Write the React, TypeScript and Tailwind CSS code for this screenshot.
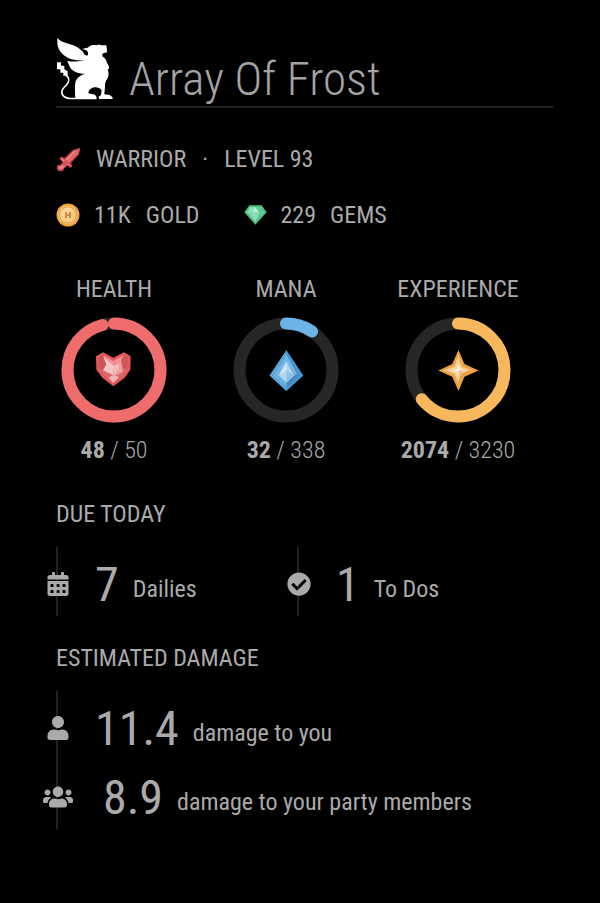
import type { ReactNode } from "react";
import { FaCalendarAlt, FaCheckCircle, FaUser, FaUsers } from "react-icons/fa";

function Griffin() {
  return (
    <svg viewBox="18 18 174 192" className="h-16 w-[58px] shrink-0" fill="#fff" aria-hidden="true">
      <path d="M22 23C31 36 50 38 70 46C86 53 97 61 104 74L112 77C116 71 115 66 109 61L97 57C104 53 112 55 117 50C122 44 132 44 140 46C149 42 155 48 159 46L169 46L170 52L171 67L160 70L157 73L157 79C166 84 170 93 171 99C176 105 178 111 177 117L173 117C177 128 177 140 171 148C166 154 165 162 165 170L163 193L179 195L187 201L188 207L147 207L146 200L153 195L155 181C148 171 137 171 128 173C119 176 115 183 115 190L135 194L140 202L139 208L58 208C43 206 32 197 33 186C34 172 52 165 54 151C54 144 50 140 45 137L40 137L40 128L31 128L31 118L21 118L21 97L33 97L33 107L43 107L43 118L53 124L53 137C60 142 60 155 54 163C48 171 38 177 38 187C38 196 48 202 60 203L76 203C75 190 74 165 77 154C81 143 92 135 105 131C83 131 66 123 59 110C57 102 53 97 52 92C66 97 82 93 104 92C91 91 75 91 62 87C42 80 23 63 22 40Z" />
    </svg>
  );
}

function Sword() {
  return (
    <svg viewBox="48 28 74 76" className="h-[25px] w-[25px] shrink-0" aria-hidden="true">
      <path d="M121 30L117 51L93 76L97 87L91 92L82 84L72 93L68 102L55 101L49 96L50 84L60 82L67 75L58 64L61 58L73 61L98 37Z" fill="#c43f46" />
      <path d="M118 34L101 41L76 67L86 77L113 50Z" fill="#e0676b" />
      <path d="M101 41L107 39L80 68L76 67Z" fill="#f19a9b" />
      <path d="M62 61L70 65L91 84L90 88L81 80L66 95L57 97L53 88L62 85L73 75L62 65Z" fill="#ea8082" />
      <path d="M73 69L82 77L72 85L65 84Z" fill="#d24e55" />
    </svg>
  );
}

function Coin() {
  return (
    <svg viewBox="0 0 24 24" className="h-6 w-6 shrink-0" aria-hidden="true">
      <circle cx="12" cy="12" r="11.5" fill="#eda33b" />
      <circle cx="12" cy="12" r="9.3" fill="#f8cc83" />
      <path d="M5.4 18.6A9.3 9.3 0 0 1 18.6 5.4Z" fill="#fbd69a" />
      <circle cx="12" cy="12" r="8.2" fill="none" stroke="#dd9b43" strokeWidth="1" />
      <path d="M10 9v6M14 9v6M10 12h4" stroke="#b9803a" strokeWidth="1.7" fill="none" />
    </svg>
  );
}

function Gem() {
  return (
    <svg viewBox="131 209 69 60" className="h-5 w-[23px] shrink-0" aria-hidden="true">
      <path d="M147 210L184 210L199 231L165 268L132 231Z" fill="#4cbd84" />
      <path d="M150 215L181 215L191 231L165 259L139 231Z" fill="#7bd5a5" />
      <path d="M150 215L165 215L153 231L139 231Z" fill="#8bdcb0" />
      <path d="M165 215L177 231L153 231Z" fill="#b3edcd" />
      <path d="M153 231L177 231L165 259Z" fill="#95ddb8" />
      <path d="M177 231L191 231L165 259ZM181 215L191 231L177 231L165 215Z" fill="#65c995" />
    </svg>
  );
}

function Heart() {
  return (
    <svg viewBox="0 0 126 126" className="h-[42px] w-[42px]" aria-hidden="true">
      <path d="M9 22L30 10L61 26L93 10L113 22L112 62L95 86L61 112L28 86L10 62Z" fill="#e4575a" />
      <path d="M17 27L31 19L61 36L92 19L105 27L104 60L88 80L61 102L35 80L18 58Z" fill="#d9686a" />
      <path d="M31 19L40 46L30 64L18 58L17 27Z" fill="#cb5557" />
      <path d="M92 19L105 27L104 60L90 58L84 40Z" fill="#cf5557" />
      <path d="M31 19L61 36L92 19L82 38L62 56L40 46Z" fill="#f19192" />
      <path d="M31 24L64 52L60 78L30 64L40 46Z" fill="#f5c4c4" />
      <path d="M64 50L84 32L90 70L66 80L60 78Z" fill="#eda0a0" />
      <path d="M64 50L76 44L78 60L62 78Z" fill="#f4bcbc" />
      <path d="M46 86L62 78L78 84L61 102Z" fill="#f3b4b4" />
    </svg>
  );
}

function Diamond() {
  return (
    <svg viewBox="144 236 104 124" className="h-[41px] w-[35px]" aria-hidden="true">
      <path d="M196 237L247 313L196 360L145 313Z" fill="#4595d1" />
      <path d="M196 237L196 251L155 313L196 349L196 360L145 313Z" fill="#5aa8de" />
      <path d="M196 251L236 313L196 349Z" fill="#4389c2" />
      <path d="M196 251L196 349L155 313Z" fill="#69b0e1" />
      <path d="M196 251L229 309L219 313L196 273L173 313L163 309Z" fill="#75b5e2" />
      <path d="M196 271L219 313L196 334L173 313Z" fill="#b3d5ef" />
      <path d="M196 271L196 297L173 313Z" fill="#d0e5f6" />
      <path d="M196 297L219 313L196 334Z" fill="#8fc1e6" />
    </svg>
  );
}

function Spark() {
  return (
    <svg viewBox="140 237 124 124" className="h-[41px] w-[41px]" aria-hidden="true">
      <path d="M202 237L220 279L263 299L220 318L202 361L183 318L141 299L183 279Z" fill="#efa03b" />
      <path d="M202 251L213 286L248 299L213 311L202 346L190 311L155 299L190 286Z" fill="#f4bd72" />
      <path d="M202 251L202 299L155 299L190 286Z" fill="#f6cb90" />
      <path d="M202 299L248 299L213 311L202 346Z" fill="#e09a45" />
      <path d="M202 265L210 289L234 299L210 308L202 332L193 308L169 299L193 289Z" fill="#f7d5a8" />
      <path d="M202 281L206 294L219 299L206 303L202 316L197 303L184 299L197 294Z" fill="#fdeedd" />
      <path d="M202 299L219 299L210 308L202 332Z" fill="#f0c48f" />
    </svg>
  );
}

type GaugeProps = { label: string; value: number; max: number; color: string; children: ReactNode };

function Gauge({ label, value, max, color, children }: GaugeProps) {
  return (
    <div className="flex flex-col items-center">
      <h2 className="leading-8 whitespace-nowrap">{label}</h2>
      <div className="mt-3 grid place-items-center">
        <svg viewBox="0 0 106 106" className="col-start-1 row-start-1 h-[106px] w-[106px]" fill="none" aria-hidden="true">
          <circle cx="53" cy="53" r="46.5" stroke="#262626" strokeWidth="12" />
          <circle
            cx="53"
            cy="53"
            r="46.5"
            stroke={color}
            strokeWidth="12"
            strokeLinecap="round"
            pathLength={max}
            strokeDasharray={`${value} ${max}`}
            transform="rotate(-90 53 53)"
          />
        </svg>
        <div className="col-start-1 row-start-1">{children}</div>
      </div>
      <p className="mt-[11px] leading-8 font-light whitespace-nowrap">
        <strong className="font-bold">{value}</strong> / {max}
      </p>
    </div>
  );
}

type StatProps = { icon: ReactNode; value: string; label: string; wide?: boolean };

function Stat({ icon, value, label, wide = false }: StatProps) {
  return (
    <div className="flex h-[69px] items-center">
      <div className="-ml-[15px] flex w-[30px] shrink-0 justify-center pt-1">{icon}</div>
      <p className={`flex items-end pt-1.5 whitespace-nowrap ${wide ? "pl-[30px]" : "pl-[22px]"}`}>
        <span className="text-5xl leading-[56px]">{value}</span>
        <span className="pl-[14px] leading-[48px]">{label}</span>
      </p>
    </div>
  );
}

export default function App() {
  return (
    <main className="min-h-screen bg-black pt-9 pb-[70px] font-['Roboto_Condensed',Roboto,sans-serif] text-2xl text-[#aaa]">
      <div className="pr-[47px] pl-14">
        <header className="flex h-[72px] items-start border-b-2 border-[#222]">
          <Griffin />
          <h1 className="pt-[15px] pl-[15px] text-[47px] leading-[56px] font-light whitespace-nowrap text-[#a3a3a3]">
            Array Of Frost
          </h1>
        </header>
        <div className="mt-[35px] flex h-8 items-center leading-8">
          <Sword />
          <span className="pl-[15px]">WARRIOR</span>
          <span className="px-4">·</span>
          <span>LEVEL 93</span>
        </div>
        <div className="mt-6 flex h-8 items-center leading-8">
          <Coin />
          <span className="pl-[14px]">11K</span>
          <span className="pr-11 pl-[15px]">GOLD</span>
          <Gem />
          <span className="pl-[14px]">229</span>
          <span className="pl-[14px]">GEMS</span>
        </div>
      </div>

      <section className="mt-[42px] grid grid-cols-3 pr-14 pl-7">
        <Gauge label="HEALTH" value={48} max={50} color="#ef6c6c">
          <Heart />
        </Gauge>
        <Gauge label="MANA" value={32} max={338} color="#6bb3e6">
          <Diamond />
        </Gauge>
        <Gauge label="EXPERIENCE" value={2074} max={3230} color="#f6b75d">
          <Spark />
        </Gauge>
      </section>

      <section className="mt-8 pr-[47px] pl-14">
        <h2 className="leading-8">DUE TODAY</h2>
        <div className="mt-[17px] grid grid-cols-[241px_1fr]">
          <div className="border-l-2 border-[#222]">
            <Stat icon={<FaCalendarAlt />} value="7" label="Dailies" />
          </div>
          <div className="border-l-2 border-[#222]">
            <Stat icon={<FaCheckCircle />} value="1" label="To Dos" />
          </div>
        </div>
      </section>

      <section className="mt-[26px] pr-[47px] pl-14">
        <h2 className="leading-8">ESTIMATED DAMAGE</h2>
        <div className="mt-[17px] border-l-2 border-[#222]">
          <Stat icon={<FaUser />} value="11.4" label="damage to you" />
          <Stat icon={<FaUsers className="w-[30px]" />} value="8.9" label="damage to your party members" wide />
        </div>
      </section>
    </main>
  );
}
